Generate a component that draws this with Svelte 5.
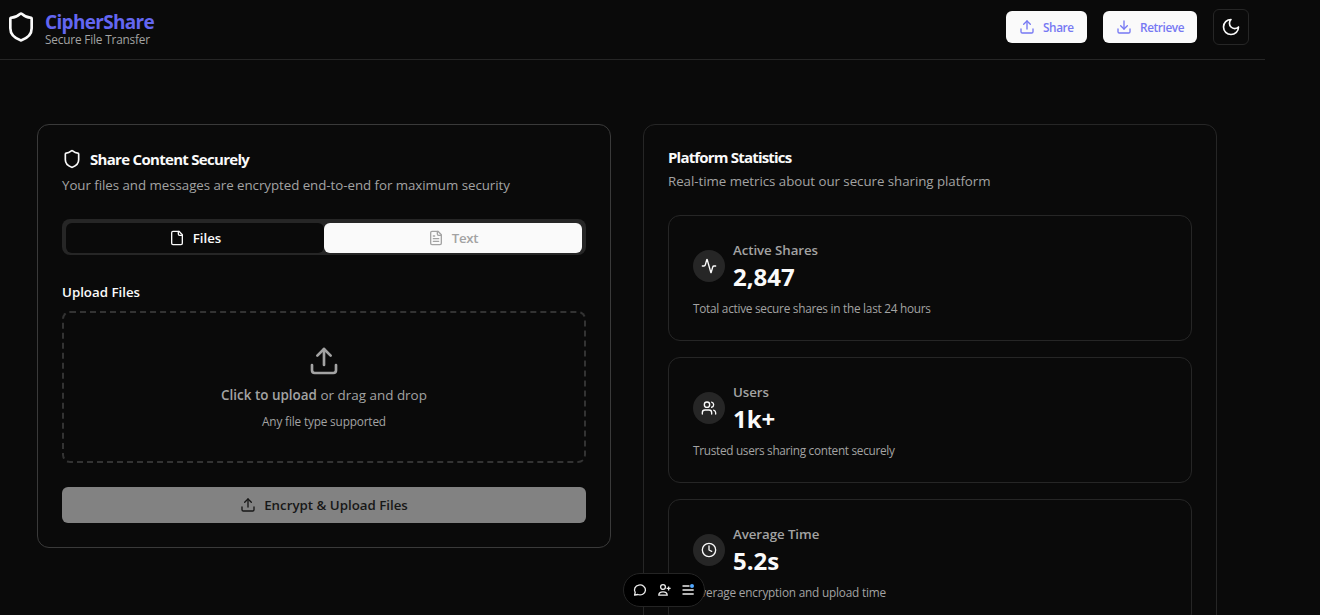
<script>
  const stats = [
    { icon: 'activity', label: 'Active Shares', value: '2,847', note: 'Total active secure shares in the last 24 hours', track: -0.26 },
    { icon: 'users', label: 'Users', value: '1k+', note: 'Trusted users sharing content securely', track: -0.3 },
    { icon: 'clock', label: 'Average Time', value: '5.2s', note: 'Average encryption and upload time', track: -0.2 }
  ];
</script>

{#snippet icon(name, size, sw = 2)}
  <svg width={size} height={size} viewBox="0 0 24 24" fill="none" stroke="currentColor" stroke-width={sw} stroke-linecap="round" stroke-linejoin="round" aria-hidden="true">
    {#if name === 'shield'}
      <path d="M20 13c0 5-3.5 7.5-7.66 8.95a1 1 0 0 1-.67-.01C7.5 20.5 4 18 4 13V6a1 1 0 0 1 1-1c2 0 4.5-1.2 6.24-2.72a1.17 1.17 0 0 1 1.52 0C14.51 3.81 17 5 19 5a1 1 0 0 1 1 1z" />
    {:else if name === 'upload'}
      <path d="M21 15v4a2 2 0 0 1-2 2H5a2 2 0 0 1-2-2v-4" /><path d="m17 8-5-5-5 5" /><path d="M12 3v12" />
    {:else if name === 'download'}
      <path d="M21 15v4a2 2 0 0 1-2 2H5a2 2 0 0 1-2-2v-4" /><path d="m7 10 5 5 5-5" /><path d="M12 15V3" />
    {:else if name === 'moon'}
      <path d="M12 3a6 6 0 0 0 9 9 9 9 0 1 1-9-9Z" />
    {:else if name === 'file' || name === 'filetext'}
      <path d="M15 2H6a2 2 0 0 0-2 2v16a2 2 0 0 0 2 2h12a2 2 0 0 0 2-2V7Z" /><path d="M14 2v4a2 2 0 0 0 2 2h4" />
      {#if name === 'filetext'}<path d="M10 9H8" /><path d="M16 13H8" /><path d="M16 17H8" />{/if}
    {:else if name === 'activity'}
      <path d="M22 12h-2.48a2 2 0 0 0-1.93 1.46l-2.35 8.36a.25.25 0 0 1-.48 0L9.24 2.18a.25.25 0 0 0-.48 0l-2.35 8.36A2 2 0 0 1 4.49 12H2" />
    {:else if name === 'users'}
      <path d="M16 21v-2a4 4 0 0 0-4-4H6a4 4 0 0 0-4 4v2" /><circle cx="9" cy="7" r="4" /><path d="M22 21v-2a4 4 0 0 0-3-3.87" /><path d="M16 3.13a4 4 0 0 1 0 7.75" />
    {:else if name === 'clock'}
      <circle cx="12" cy="12" r="10" /><path d="M12 6v6l4 2" />
    {/if}
  </svg>
{/snippet}

<div class="page">
  <header>
    <div class="brand">
      {@render icon('shield', 32)}
      <div class="names">
        <span class="name">CipherShare</span>
        <span class="tag">Secure File Transfer</span>
      </div>
    </div>
    <nav>
      <button class="pill share">{@render icon('upload', 16)}<span>Share</span></button>
      <button class="pill retrieve">{@render icon('download', 16)}<span>Retrieve</span></button>
      <button class="theme" aria-label="Toggle theme">{@render icon('moon', 20)}</button>
    </nav>
  </header>

  <main>
    <section class="card main-card">
      <h2>{@render icon('shield', 20)}<span>Share Content Securely</span></h2>
      <p class="desc">Your files and messages are encrypted end-to-end for maximum security</p>
      <div class="tabs">
        <button class="tab active">{@render icon('file', 16)}<span>Files</span></button>
        <button class="tab text">{@render icon('filetext', 16)}<span>Text</span></button>
      </div>
      <span class="label">Upload Files</span>
      <div class="drop">
        {@render icon('upload', 32)}
        <p class="click"><b>Click to upload</b> or drag and drop</p>
        <p class="any">Any file type supported</p>
      </div>
      <button class="submit">{@render icon('upload', 16)}<span>Encrypt &amp; Upload Files</span></button>
    </section>

    <section class="card stats">
      <h2>Platform Statistics</h2>
      <p class="desc">Real-time metrics about our secure sharing platform</p>
      <div class="list">
        {#each stats as s}
          <article>
            <div class="row">
              <div class="dot">{@render icon(s.icon, 16)}</div>
              <div class="fig">
                <span class="slabel">{s.label}</span>
                <strong>{s.value}</strong>
              </div>
            </div>
            <p class="note" style="letter-spacing: {s.track}px">{s.note}</p>
          </article>
        {/each}
      </div>
    </section>
  </main>

  <div class="toolbar">
    <svg width="16" height="16" viewBox="0 0 16 16" fill="none" stroke="currentColor" stroke-width="1.3" stroke-linejoin="round"><path d="M2.6 13.2 3.2 10.4A5.5 5 0 1 1 5.8 12.5Z" /></svg>
    <svg width="16" height="16" viewBox="0 0 16 16" fill="none" stroke="currentColor" stroke-width="1.3"><circle cx="7" cy="5" r="2.4" /><path d="M2.8 13.2c0-2.2 1.6-3.4 4.2-3.4s4.2 1.2 4.2 3.4Z" /><path d="M12.6 4.4v4M10.6 6.4h4" /></svg>
    <svg width="16" height="16" viewBox="0 0 16 16" fill="none" stroke="currentColor" stroke-width="1.5"><path d="M2.5 4h7M2.5 8h11.2M2.5 12h11.2" /><circle cx="12" cy="4" r="2" fill="#52a8ff" stroke="none" /></svg>
  </div>
</div>

<style>
  :global(body) { background: #0a0a0a; overflow: hidden; }
  .page { position: relative; width: 1320px; height: 615px; overflow: hidden; background: #0a0a0a; color: #fafafa; font-family: "Open Sans", "Noto Sans", sans-serif; font-size: 13.3px; white-space: nowrap; }
  .page, .page :global(*) { box-sizing: border-box; }
  svg { display: block; flex: none; }
  h2, p { margin: 0; }
  button { font: inherit; border: 0; padding: 0; color: inherit; }
  header { width: 1265px; height: 60px; display: flex; justify-content: space-between; border-bottom: 1px solid #262626; padding: 9px 16px 0 5px; }
  .brand { display: flex; gap: 8px; padding-top: 2px; }
  .names { display: flex; flex-direction: column; }
  .name { font-size: 19px; line-height: 22px; font-weight: 700; color: #6366f1; letter-spacing: -0.68px; }
  .tag { font-size: 11.8px; line-height: 13px; font-weight: 500; color: #a3a3a3; letter-spacing: -0.17px; }
  nav { display: flex; gap: 16px; align-items: flex-start; }
  .pill { margin-top: 2px; height: 32px; display: flex; align-items: center; gap: 8px; padding: 0 0 0 13px; border-radius: 6px; background: #fafafa; color: #7678f3; font-size: 11.8px; font-weight: 600; letter-spacing: -0.4px; }
  .pill span { line-height: 16px; padding-bottom: 1px; }
  .share { width: 81px; }
  .retrieve { width: 94px; }
  .theme { width: 36px; height: 36px; border: 1px solid #262626; border-radius: 6px; background: #0a0a0a; display: grid; place-items: center; }
  main { display: flex; gap: 32px; align-items: flex-start; padding: 64px 0 0 37px; }
  .card { width: 574px; border: 1px solid #262626; border-radius: 12px; padding: 24px; }
  .main-card { height: 424px; border-color: #3a3a3a; }
  h2 { display: flex; align-items: center; gap: 8px; height: 20px; font-size: 15px; font-weight: 700; letter-spacing: -0.7px; }
  .desc { height: 20px; line-height: 20px; margin-top: 6px; color: #a3a3a3; font-size: 13.3px; letter-spacing: -0.038px; }
  .tabs { display: flex; height: 36px; margin-top: 24px; padding: 4px 4px 2px; border-radius: 8px; background: #262626; }
  .tab { flex: 1; display: flex; align-items: center; justify-content: center; gap: 8px; border-radius: 6px; background: #fafafa; color: #a3a3a3; font-weight: 600; }
  .tab.active { background: #0a0a0a; color: #fafafa; }
  .tab.text { letter-spacing: -0.35px; }
  .label { display: block; margin-top: 27px; height: 21px; line-height: 20px; font-weight: 600; }
  .drop { height: 152px; margin-top: 8px; border: 2px dashed #333; border-radius: 8px; display: flex; flex-direction: column; align-items: center; padding-top: 32px; color: #a3a3a3; }
  .click { margin-top: 8px; line-height: 20px; font-size: 13.45px; }
  .click b { font-weight: 600; }
  .any { margin-top: 8px; line-height: 16px; font-size: 11.8px; letter-spacing: -0.16px; }
  .submit { width: 100%; height: 36px; margin-top: 24px; border-radius: 6px; background: #828282; color: #171717; display: flex; align-items: center; justify-content: center; gap: 8px; font-weight: 600; }
  .stats h2 { height: 16px; letter-spacing: -0.81px; }
  .list { display: flex; flex-direction: column; gap: 16px; margin-top: 24px; }
  article { height: 126px; border: 1px solid #262626; border-radius: 12px; padding: 24px; }
  .row { display: flex; align-items: center; gap: 8px; height: 52px; }
  .dot { width: 32px; height: 32px; border-radius: 50%; background: #262626; display: grid; place-items: center; }
  .fig { display: flex; flex-direction: column; }
  .slabel { line-height: 20px; font-weight: 600; color: #a3a3a3; letter-spacing: -0.07px; }
  strong { height: 32px; font-size: 24px; line-height: 33px; font-weight: 700; }
  .note { margin-top: 8px; line-height: 16px; font-size: 11.8px; color: #a3a3a3; }
  .toolbar { position: absolute; left: 623px; top: 573px; width: 82px; height: 34px; border-radius: 17px; background: #000; border: 1px solid #242424; display: flex; align-items: center; justify-content: center; gap: 8px; color: #ededed; }
</style>
